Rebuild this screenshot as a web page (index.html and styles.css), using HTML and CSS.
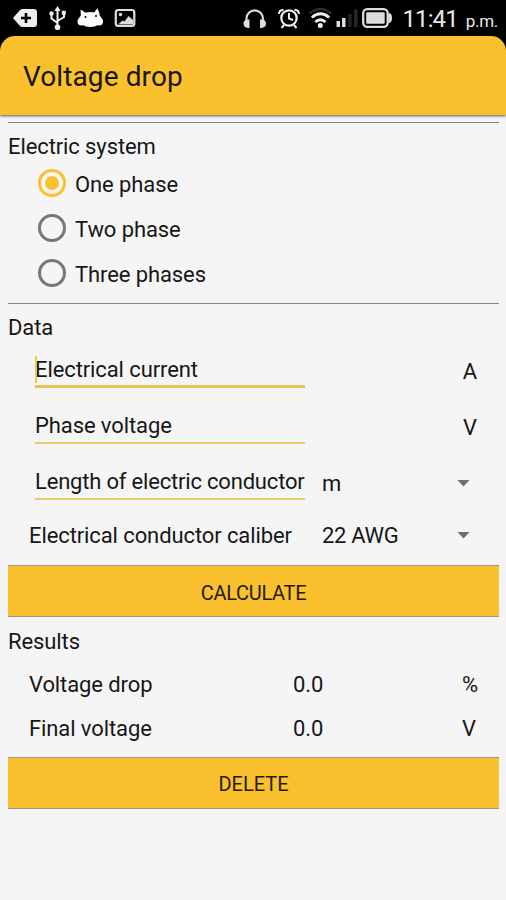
FILE: index.html
```html
<!DOCTYPE html>
<html lang="en">
<head>
<meta charset="utf-8">
<title>Voltage drop</title>
<link rel="stylesheet" href="styles.css">
</head>
<body>
<div class="top">
  <div class="status">
    <svg class="status-icons" width="506" height="36" viewBox="0 0 506 36" fill="none" aria-hidden="true">
      <path d="M13 18 20 10q1-1 3-1h11q3 0 3 3v12q0 3-3 3H23q-2 0-3-1z" fill="#eee"/>
      <path d="M26 13v10M21 18h10" stroke="#000" stroke-width="2.6"/>
      <g stroke="#eee" stroke-width="2"><path d="M57.500 10v17M51.500 13v5.500l6 4.500M64 13v4l-6.500 4"/></g>
      <path d="m57.500 6 3.200 5h-6.400z" fill="#eee"/><circle cx="57.500" cy="27.300" r="2.800" fill="#eee"/><circle cx="51.500" cy="13.500" r="2.200" fill="#eee"/><path d="M61.800 10.800h4v4h-4z" fill="#eee"/>
      <ellipse cx="90.300" cy="19.500" rx="11.300" ry="7.500" fill="#fff"/>
      <path d="M80.500 9.500 86 13l-5 4zM97.500 8.300 100 15l-6-2.500z" fill="#fff"/>
      <circle cx="81.500" cy="21.500" r="4" fill="#fff"/><circle cx="99" cy="21.500" r="4" fill="#fff"/>
      <circle cx="85.500" cy="17" r="1" fill="#000"/><circle cx="96" cy="16" r="1" fill="#000"/>
      <rect x="115.800" y="10" width="18.500" height="16" rx="2.500" stroke="#ddd" stroke-width="2.200"/>
      <path d="m118 24.500 4.500-4 2 1 4-5.500 4.500 4v4.500z" fill="#ddd"/><circle cx="120.500" cy="14.500" r="1.700" fill="#ddd"/>
      <path d="M246.500 22v-3.500a8.200 8.200 0 0 1 16.400 0V22" stroke="#ddd" stroke-width="2.200"/>
      <path d="M249.500 19.500v8.500q-6 0-6-4.500t6-4M260 19.500v8.500q6 0 6-4.500t-6-4" fill="#ddd"/>
      <circle cx="289" cy="18" r="7.700" stroke="#eee" stroke-width="2.200"/>
      <path d="M289 13v5.500l4 1.500M284 25l-2.500 3M294 25l2.500 3M279 14q0-4 4.500-4.300M299 14q0-4-4.500-4.300" stroke="#eee" stroke-width="2"/>
      <path d="M309.500 13.500q11-9 22 0" stroke="#2b2b2b" stroke-width="2.500"/>
      <path d="M311.800 17.500q8.700-7.500 17.400 0M315.300 22q5-4.500 10.200 0" stroke="#eee" stroke-width="2.800"/><circle cx="320.300" cy="25.500" r="2.500" fill="#eee"/>
      <path d="M336.500 21h3.500v6h-3.500zM342 18h3.500v9H342z" fill="#ddd"/><path d="M348.500 14h3v13h-3zM354 9.500h3.500V27H354z" fill="#262626"/>
      <rect x="363.200" y="9.200" width="24.500" height="17.600" rx="4" stroke="#ddd" stroke-width="2.300"/>
      <rect x="366.200" y="12.200" width="18.500" height="11.600" rx="1" fill="#ddd"/><path d="M388.500 13q3.500 0 3.500 5t-3.500 5z" fill="#ddd"/>
    </svg>
    <div class="clock"><span class="time">11:41</span><span class="meridiem">p.m.</span></div>
  </div>
  <header class="appbar"><h1>Voltage drop</h1></header>
</div>
<main>
  <hr class="rule">
  <h2>Electric system</h2>
  <div class="radios">
    <label class="radio"><span class="ring on"></span><span>One phase</span></label>
    <label class="radio"><span class="ring"></span><span>Two phase</span></label>
    <label class="radio"><span class="ring"></span><span>Three phases</span></label>
  </div>
  <hr class="rule">
  <h2>Data</h2>
  <div class="row"><div class="field focus">Electrical current</div><div class="unit">A</div></div>
  <div class="row"><div class="field">Phase voltage</div><div class="unit">V</div></div>
  <div class="row"><div class="field length">Length of electric conductor</div><div class="select low"><span>m</span><i class="arrow"></i></div></div>
  <div class="row caliber"><div class="label">Electrical conductor caliber</div><div class="select"><span>22 AWG</span><i class="arrow"></i></div></div>
  <button class="button" type="button">CALCULATE</button>
  <h2 class="results">Results</h2>
  <div class="result"><span>Voltage drop</span><span>0.0</span><span>%</span></div>
  <div class="result"><span>Final voltage</span><span>0.0</span><span>V</span></div>
  <button class="button delete" type="button">DELETE</button>
</main>
</body>
</html>
```
FILE: styles.css
```css
* { box-sizing: border-box; }
body {
  margin: 0;
  height: 900px;
  overflow: hidden;
  background: #f5f5f5;
  color: #171717;
  font: 22px/28px Roboto, "Liberation Sans", sans-serif;
  letter-spacing: -0.1px;
}
.top { background: #000; }
.status { position: relative; height: 36px; }
.status-icons { display: block; }
.clock {
  position: absolute;
  right: 8px;
  top: 5px;
  color: #e8e8e8;
  font-size: 24px;
  white-space: nowrap;
}
.time { letter-spacing: -0.9px; }
.meridiem { margin-left: 8px; font-size: 17px; letter-spacing: -0.3px; }
.appbar {
  display: flex;
  align-items: center;
  height: 79px;
  padding: 2px 23px 0;
  background: #fbc02d;
  border-radius: 15px 15px 0 0;
  box-shadow: 0 1px 3px rgba(0, 0, 0, 0.65);
}
h1 { margin: 0; font-size: 28px; font-weight: 400; letter-spacing: 0.1px; }
main { padding: 7px 7px 0 8px; }
.rule { height: 1px; margin: 0; border: 0; background: #858585; }
h2 { height: 38px; margin: 0; padding-top: 10px; font-size: 22px; font-weight: 400; }
.radios { margin-bottom: 7px; }
.radio { display: flex; align-items: center; gap: 9px; height: 45px; padding: 2px 0 0 30px; }
.ring {
  display: flex;
  width: 28px;
  height: 28px;
  margin-top: -3px;
  border: 3px solid #777;
  border-radius: 50%;
}
.ring.on { border-color: #fbc02d; }
.ring.on::before { content: ""; width: 14px; height: 14px; margin: auto; border-radius: 50%; background: #fbc02d; }
.row {
  display: grid;
  grid-template-columns: 270px 1fr;
  column-gap: 17px;
  height: 56px;
  padding: 12px 22px 0 27px;
}
.field { position: relative; height: 34px; border-bottom: 2px solid #eacb6c; padding-top: 2px; white-space: nowrap; }
.focus { border-bottom: 3px solid #e8c355; }
.focus::before { content: ""; position: absolute; left: 0; top: 2px; width: 2px; height: 27px; background: #f3c34b; }
.length { letter-spacing: -0.19px; }
.unit { padding-top: 4px; text-align: right; }
.select { display: flex; justify-content: space-between; align-items: center; height: 28px; padding-right: 7px; letter-spacing: -0.3px; }
.low { margin-top: 4px; }
.arrow { width: 13px; height: 7px; margin-top: -2px; background: #707070; clip-path: polygon(0 0, 100% 0, 50% 100%); }
.caliber { grid-template-columns: 276px 1fr; padding-left: 21px; }
.button {
  display: block;
  width: 100%;
  height: 52px;
  margin-top: -1px;
  padding: 4px 0 0;
  border: solid #a0968c;
  border-width: 1px 0;
  background: #fbc02d;
  color: #231c0c;
  font: 20px/24px Roboto, "Liberation Sans", sans-serif;
  letter-spacing: -0.3px;
}
.results { height: 46px; padding-top: 11px; }
.result {
  display: grid;
  grid-template-columns: 264px 169px 1fr;
  align-items: center;
  height: 44px;
  padding-left: 21px;
}
.delete { margin-top: 6px; padding-top: 2px; letter-spacing: 0; }
```
